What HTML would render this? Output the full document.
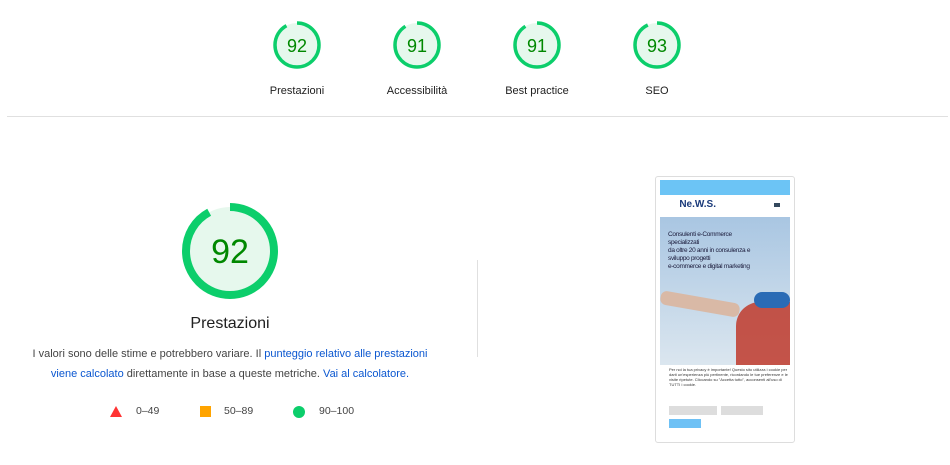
<!DOCTYPE html><html><head><style>
body{margin:0;width:950px;height:465px;background:#fff;font-family:"Liberation Sans",Roboto,sans-serif;position:relative;overflow:hidden;color:#212121}
.g{position:absolute;text-align:center;width:120px}
.g .lbl{font-size:11px;margin-top:10px}
.hr{position:absolute;left:7px;top:116px;width:941px;height:1px;background:#e0e0e0}
.a{position:absolute}
a{color:#0b57d0;text-decoration:none}
</style></head><body>
<div class="g" style="left:237px;top:20px"><svg width="50" height="50"><circle cx="25" cy="25" r="22" fill="#e6f8ed"/><circle cx="25" cy="25" r="22" fill="none" stroke="#0cce6b" stroke-width="3.5" stroke-dasharray="127 200" transform="rotate(-90 25 25)"/><text x="25" y="32" text-anchor="middle" font-size="18" fill="#008800" font-family="Liberation Sans">92</text></svg><div class="lbl">Prestazioni</div></div>
<div class="g" style="left:357px;top:20px"><svg width="50" height="50"><circle cx="25" cy="25" r="22" fill="#e6f8ed"/><circle cx="25" cy="25" r="22" fill="none" stroke="#0cce6b" stroke-width="3.5" stroke-dasharray="125.8 200" transform="rotate(-90 25 25)"/><text x="25" y="32" text-anchor="middle" font-size="18" fill="#008800" font-family="Liberation Sans">91</text></svg><div class="lbl">Accessibilità</div></div>
<div class="g" style="left:477px;top:20px"><svg width="50" height="50"><circle cx="25" cy="25" r="22" fill="#e6f8ed"/><circle cx="25" cy="25" r="22" fill="none" stroke="#0cce6b" stroke-width="3.5" stroke-dasharray="125.8 200" transform="rotate(-90 25 25)"/><text x="25" y="32" text-anchor="middle" font-size="18" fill="#008800" font-family="Liberation Sans">91</text></svg><div class="lbl">Best practice</div></div>
<div class="g" style="left:597px;top:20px"><svg width="50" height="50"><circle cx="25" cy="25" r="22" fill="#e6f8ed"/><circle cx="25" cy="25" r="22" fill="none" stroke="#0cce6b" stroke-width="3.5" stroke-dasharray="128.5 200" transform="rotate(-90 25 25)"/><text x="25" y="32" text-anchor="middle" font-size="18" fill="#008800" font-family="Liberation Sans">93</text></svg><div class="lbl">SEO</div></div>
<div class="hr"></div>
<svg class="a" style="left:180px;top:201px" width="100" height="100"><circle cx="50" cy="50" r="44" fill="#e6f8ed"/><circle cx="50" cy="50" r="44" fill="none" stroke="#0cce6b" stroke-width="8" stroke-dasharray="254.3 400" transform="rotate(-90 50 50)"/><text x="50" y="62" text-anchor="middle" font-size="34" fill="#008800" font-family="Liberation Sans">92</text></svg>
<div class="a" style="left:130px;top:315px;width:200px;text-align:center;font-size:16px">Prestazioni</div>
<div class="a" style="left:0px;top:344px;width:460px;text-align:center;font-size:11px;line-height:20px;color:#444;white-space:nowrap">I valori sono delle stime e potrebbero variare. Il <a>punteggio relativo alle prestazioni</a><br><a>viene calcolato</a> direttamente in base a queste metriche. <a>Vai al calcolatore.</a></div>
<div class="a" style="left:110px;top:405px;font-size:10.5px;color:#444;width:260px;height:14px">
<span style="position:absolute;left:0;top:1px;width:0;height:0;border-left:6px solid transparent;border-right:6px solid transparent;border-bottom:11px solid #ff3333"></span><span style="position:absolute;left:26px">0–49</span>
<span style="position:absolute;left:90px;top:1px;width:11px;height:11px;background:#ffa400"></span><span style="position:absolute;left:114px">50–89</span>
<span style="position:absolute;left:183px;top:1px;width:12px;height:12px;border-radius:50%;background:#0cce6b"></span><span style="position:absolute;left:209px">90–100</span></div>
<div class="a" style="left:477px;top:260px;width:1px;height:97px;background:#e0e0e0"></div>
<div class="a" style="left:655px;top:176px;width:138px;height:265px;border:1px solid #ddd;border-radius:3px;background:#fff;overflow:hidden">
<div style="position:absolute;left:4px;top:3px;width:130px;height:15px;background:#6cc4f5"></div>
<div style="position:absolute;left:10px;top:22px;width:50px;height:16px;font-size:10px;font-weight:bold;color:#1a3a7a;text-align:right">Ne.W.S.</div>
<div style="position:absolute;left:118px;top:26px;width:6px;height:4px;background:#34495e"></div>
<div style="position:absolute;left:4px;top:40px;width:130px;height:148px;background:linear-gradient(#a9c6e2,#dbe6ef)"></div>
<div style="position:absolute;left:12px;top:54px;font-size:6.5px;line-height:8px;color:#1a1a3a;letter-spacing:-0.3px">Consulenti e-Commerce<br>specializzati<br>da oltre 20 anni in consulenza e<br>sviluppo progetti<br>e-commerce e digital marketing</div>
<div style="position:absolute;left:4px;top:120px;width:80px;height:14px;background:#d9b9a6;transform:rotate(10deg);border-radius:6px"></div>
<div style="position:absolute;left:80px;top:125px;width:54px;height:63px;background:#c0392b;border-radius:24px 0 0 0;opacity:.85"></div>
<div style="position:absolute;left:98px;top:115px;width:36px;height:16px;background:#2a6bb5;border-radius:8px"></div>
<div style="position:absolute;left:13px;top:190px;width:120px;font-size:4px;line-height:5px;color:#333">Per noi la tua privacy è importante! Questo sito utilizza i cookie per darti un'esperienza più pertinente, ricordando le tue preferenze e le visite ripetute. Cliccando su "Accetta tutto", acconsenti all'uso di TUTTI i cookie.</div>
<div style="position:absolute;left:13px;top:229px;width:48px;height:9px;background:#ddd"></div>
<div style="position:absolute;left:65px;top:229px;width:42px;height:9px;background:#ddd"></div>
<div style="position:absolute;left:13px;top:242px;width:32px;height:9px;background:#6ec1f5"></div>
</div>
</body></html>
